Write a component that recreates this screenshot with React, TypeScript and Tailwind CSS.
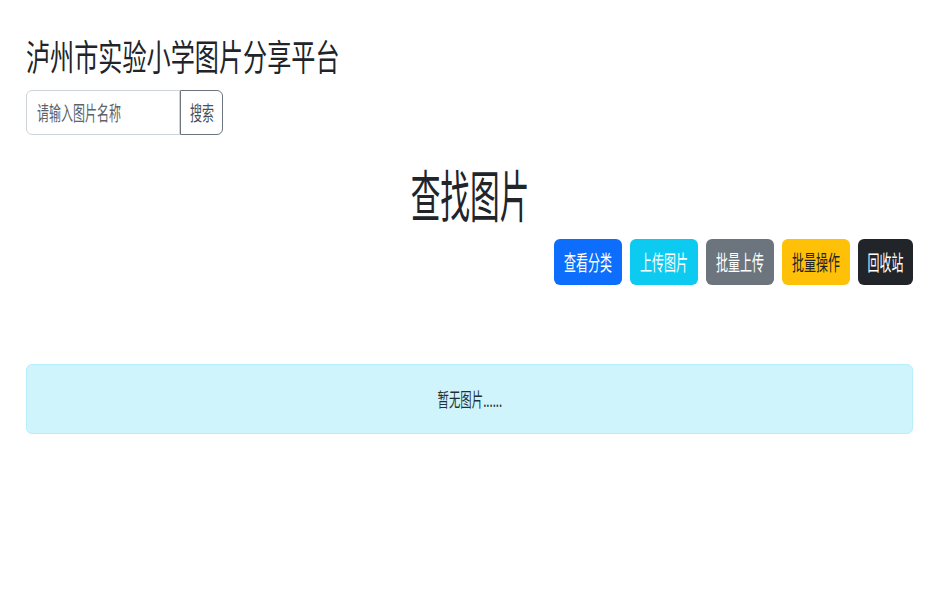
const font = { fontFamily: '"Noto Sans CJK SC", "Noto Sans", sans-serif' };

type Btn = { label: string; cls: string };

const buttons: Btn[] = [
  { label: "查看分类", cls: "bg-[#0d6efd] text-white" },
  { label: "上传图片", cls: "bg-[#0dcaf0] text-white" },
  { label: "批量上传", cls: "bg-[#6c757d] text-white" },
  { label: "批量操作", cls: "bg-[#ffc107] text-[#212529]" },
  { label: "回收站", cls: "bg-[#212529] text-white" },
];

export default function App() {
  return (
    <div className="min-h-screen w-full bg-white text-[#212529]" style={font}>
      <div className="ml-[26px] mr-[15px] flex flex-col">
        {/* 标题 */}
        <div className="mt-[37px] h-[36px] text-[36px] leading-[36px] whitespace-nowrap">
          <span className="inline-block origin-left scale-x-[0.67]">泸州市实验小学图片分享平台</span>
        </div>

        {/* 搜索 */}
        <div className="mt-[17px] flex h-[45px]">
          <div className="flex w-[154px] items-center overflow-hidden rounded-l-[6px] border border-[#ced4da] pl-[10px] text-[20px] text-[#5c636a] whitespace-nowrap">
            <span className="inline-block origin-left scale-x-[0.6]">请输入图片名称</span>
          </div>
          <div className="flex w-[43px] items-center justify-center rounded-r-[6px] border border-[#6c757d] text-[20px] text-[#495057] whitespace-nowrap">
            <span className="inline-block scale-x-[0.6]">搜索</span>
          </div>
        </div>

        {/* 查找图片 */}
        <div className="mt-[30px] flex h-[56px] items-center justify-center text-[56px] leading-[56px] whitespace-nowrap">
          <span className="inline-block scale-x-[0.53]">查找图片</span>
        </div>

        {/* 操作按钮 */}
        <div className="mt-[18px] flex justify-end gap-[8px]">
          {buttons.map((b) => (
            <div
              key={b.label}
              className={`flex h-[46px] items-center justify-center rounded-[6px] text-[21px] whitespace-nowrap ${b.cls} ${
                b.label.length === 3 ? "w-[55px]" : "w-[68px]"
              }`}
            >
              <span className="inline-block scale-x-[0.57]">{b.label}</span>
            </div>
          ))}
        </div>

        {/* 提示 */}
        <div className="mt-[79px] flex h-[70px] items-center justify-center rounded-[6px] border border-[#b6effb] bg-[#cff4fc] text-[19px] text-[#1f3238] whitespace-nowrap">
          <span className="inline-block scale-x-[0.6]">暂无图片......</span>
        </div>
      </div>
    </div>
  );
}
